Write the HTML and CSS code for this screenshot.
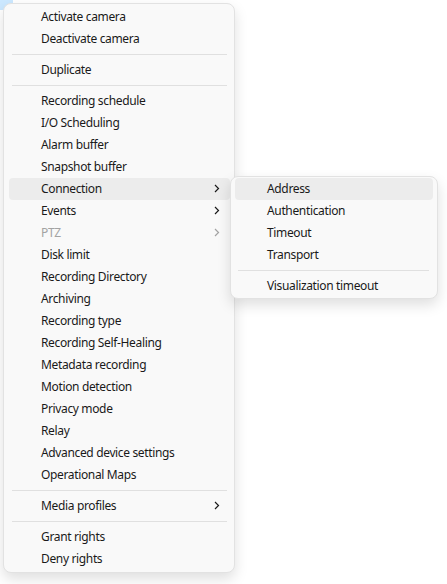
FILE: index.html
```html
<!DOCTYPE html>
<html>
<head>
<meta charset="utf-8">
<link rel="stylesheet" href="styles.css">
</head>
<body>
<div class="selection"></div>
<div class="menu main">
  <div class="item">Activate camera</div>
  <div class="item">Deactivate camera</div>
  <div class="sep"></div>
  <div class="item">Duplicate</div>
  <div class="sep"></div>
  <div class="item">Recording schedule</div>
  <div class="item">I/O Scheduling</div>
  <div class="item">Alarm buffer</div>
  <div class="item">Snapshot buffer</div>
  <div class="item hover sub">Connection<svg class="chev" width="6" height="9" viewBox="0 0 6 9"><path d="M1 1 L4.5 4.5 L1 8" fill="none" stroke="currentColor" stroke-width="1.2"/></svg></div>
  <div class="item sub">Events<svg class="chev" width="6" height="9" viewBox="0 0 6 9"><path d="M1 1 L4.5 4.5 L1 8" fill="none" stroke="currentColor" stroke-width="1.2"/></svg></div>
  <div class="item sub disabled">PTZ<svg class="chev" width="6" height="9" viewBox="0 0 6 9"><path d="M1 1 L4.5 4.5 L1 8" fill="none" stroke="currentColor" stroke-width="1.2"/></svg></div>
  <div class="item">Disk limit</div>
  <div class="item">Recording Directory</div>
  <div class="item">Archiving</div>
  <div class="item">Recording type</div>
  <div class="item">Recording Self-Healing</div>
  <div class="item">Metadata recording</div>
  <div class="item">Motion detection</div>
  <div class="item">Privacy mode</div>
  <div class="item">Relay</div>
  <div class="item">Advanced device settings</div>
  <div class="item">Operational Maps</div>
  <div class="sep"></div>
  <div class="item sub">Media profiles<svg class="chev" width="6" height="9" viewBox="0 0 6 9"><path d="M1 1 L4.5 4.5 L1 8" fill="none" stroke="currentColor" stroke-width="1.2"/></svg></div>
  <div class="sep"></div>
  <div class="item">Grant rights</div>
  <div class="item">Deny rights</div>
</div>
<div class="menu submenu">
  <div class="item hover">Address</div>
  <div class="item">Authentication</div>
  <div class="item">Timeout</div>
  <div class="item">Transport</div>
  <div class="sep"></div>
  <div class="item">Visualization timeout</div>
</div>
</body>
</html>
```
FILE: styles.css
```css
html, body {
  margin: 0;
  padding: 0;
  background: #ffffff;
}
body {
  padding: 3px;
  position: relative;
  width: 447px;
  height: 584px;
  box-sizing: border-box;
  font-family: "Noto Sans", "Open Sans", sans-serif;
  font-size: 12px;
  letter-spacing: -0.35px;
  color: #1a1a1a;
}
.selection {
  position: absolute;
  left: 0;
  top: 0;
  width: 13px;
  height: 10px;
  background: #cce8ff;
}
.menu {
  position: relative;
  background: #f9f9f9;
  border: 1px solid #e2e2e2;
  border-radius: 8px;
  box-shadow: 0 6px 14px rgba(0, 0, 0, 0.13);
  box-sizing: border-box;
}
.main {
  width: 232px;
  padding: 2px 0;
}
.submenu {
  position: absolute;
  left: 230px;
  top: 176px;
  width: 208px;
  padding: 1px 0;
}
.item {
  height: 22px;
  box-sizing: border-box;
  padding-bottom: 2px;
  display: flex;
  align-items: center;
  margin: 0 4px 0 5px;
  padding-left: 32px;
  border-radius: 4px;
  white-space: nowrap;
  position: relative;
}
.submenu .item {
  margin: 0 4px;
  padding-left: 32px;
}
.item.hover {
  background: #ececec;
}
.item.disabled {
  color: #a3a3a3;
}
.chev {
  position: absolute;
  right: 10px;
  top: 6px;
}
.sep {
  height: 1px;
  background: #e0e0e0;
  margin: 4px 7px 4px 8px;
}
.submenu .sep {
  margin: 4px 8px 4px 7px;
}
```
